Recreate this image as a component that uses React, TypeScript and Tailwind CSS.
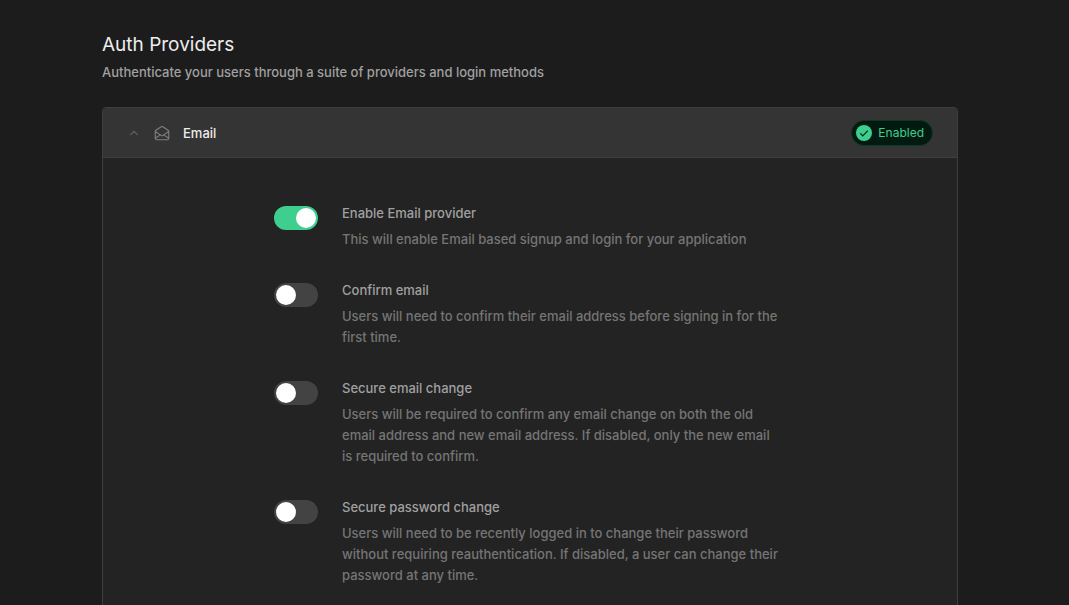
import { useState } from "react";

type Setting = { id: string; label: string; description: string; enabled: boolean };

const settings: Setting[] = [
  {
    id: "enable-email",
    label: "Enable Email provider",
    description: "This will enable Email based signup and login for your application",
    enabled: true,
  },
  {
    id: "confirm-email",
    label: "Confirm email",
    description: "Users will need to confirm their email address before signing in for the first time.",
    enabled: false,
  },
  {
    id: "secure-email-change",
    label: "Secure email change",
    description:
      "Users will be required to confirm any email change on both the old email address and new email address. If disabled, only the new email is required to confirm.",
    enabled: false,
  },
  {
    id: "secure-password-change",
    label: "Secure password change",
    description:
      "Users will need to be recently logged in to change their password without requiring reauthentication. If disabled, a user can change their password at any time.",
    enabled: false,
  },
];

function ChevronUp() {
  return (
    <svg className="size-3.5 shrink-0 text-[#5c5c5c]" viewBox="0 0 24 24" fill="none" stroke="currentColor" strokeWidth="2" strokeLinecap="round" strokeLinejoin="round" aria-hidden="true">
      <path d="M18 15l-6-6-6 6" />
    </svg>
  );
}

function OpenEnvelope() {
  return (
    <svg className="size-[18px] shrink-0 text-[#7e7e7e]" viewBox="0 0 24 24" fill="none" stroke="currentColor" strokeWidth="1.5" strokeLinecap="round" strokeLinejoin="round" aria-hidden="true">
      <path d="M3 19v-8.93a2 2 0 01.89-1.664l7-4.666a2 2 0 012.22 0l7 4.666A2 2 0 0121 10.07V19M3 19a2 2 0 002 2h14a2 2 0 002-2M3 19l6.75-4.5M21 19l-6.75-4.5M3 10l6.75 4.5M21 10l-6.75 4.5m0 0l-1.14.76a2 2 0 01-2.22 0l-1.14-.76" />
    </svg>
  );
}

function EnabledBadge() {
  return (
    <span className="flex h-[26px] items-center gap-1.5 rounded-full border border-[#0f3524] bg-[#031a11] pr-2 pl-1 text-xs text-[#3ecf8e]">
      <svg className="size-4" viewBox="0 0 16 16" aria-hidden="true">
        <circle cx="8" cy="8" r="8" fill="#3ecf8e" />
        <path d="M4.3 8.4l2.5 2.4 5-5.1" fill="none" stroke="#06281a" strokeWidth="1.2" />
      </svg>
      Enabled
    </span>
  );
}

function SettingRow({ setting }: { setting: Setting }) {
  const [on, setOn] = useState(setting.enabled);
  return (
    <div className="flex items-start gap-6">
      <input
        id={setting.id}
        type="checkbox"
        role="switch"
        checked={on}
        onChange={(e) => setOn(e.target.checked)}
        aria-describedby={`${setting.id}-description`}
        className="mt-[3px] flex h-6 w-11 shrink-0 cursor-pointer appearance-none items-center rounded-full bg-[#434343] p-0.5 before:size-5 before:rounded-full before:bg-white before:content-[''] checked:justify-end checked:bg-[#3ecf8e]"
      />
      <div className="min-w-0 flex-1 pr-1">
        <label htmlFor={setting.id} className="block text-[13px] leading-5 font-medium text-[#a0a0a0]">
          {setting.label}
        </label>
        <p id={`${setting.id}-description`} className="mt-1.5 text-[13px] leading-[21px] font-medium text-[#757575]">
          {setting.description}
        </p>
      </div>
    </div>
  );
}

export default function App() {
  const [open, setOpen] = useState(true);
  return (
    <main className="min-h-screen bg-[#1c1c1c] pt-[31px] pr-[111px] pl-[102px] font-['Inter','Liberation_Sans',sans-serif]">
      <header>
        <h1 className="text-[19px] leading-7 text-[#ededed]">Auth Providers</h1>
        <p className="mt-[3px] text-[13px] leading-5 font-medium text-[#a0a0a0]">
          Authenticate your users through a suite of providers and login methods
        </p>
      </header>
      <section className="mt-[25px] rounded border border-[#3e3e3e] bg-[#232323]">
        <button
          type="button"
          aria-expanded={open}
          onClick={() => setOpen(!open)}
          className="flex h-[50px] w-full items-center justify-between rounded-t border-b border-[#3e3e3e] bg-[#343434] px-6 text-left"
        >
          <span className="flex items-center">
            <ChevronUp />
            <span className="ml-3 flex items-center gap-3">
              <OpenEnvelope />
              <span className="text-[13px] leading-5 font-medium text-[#ededed]">Email</span>
            </span>
          </span>
          <EnabledBadge />
        </button>
        {open && (
          <div className="mx-auto flex max-w-lg flex-col gap-[30px] pt-[45px] pb-12">
            {settings.map((s) => (
              <SettingRow key={s.id} setting={s} />
            ))}
          </div>
        )}
      </section>
    </main>
  );
}
